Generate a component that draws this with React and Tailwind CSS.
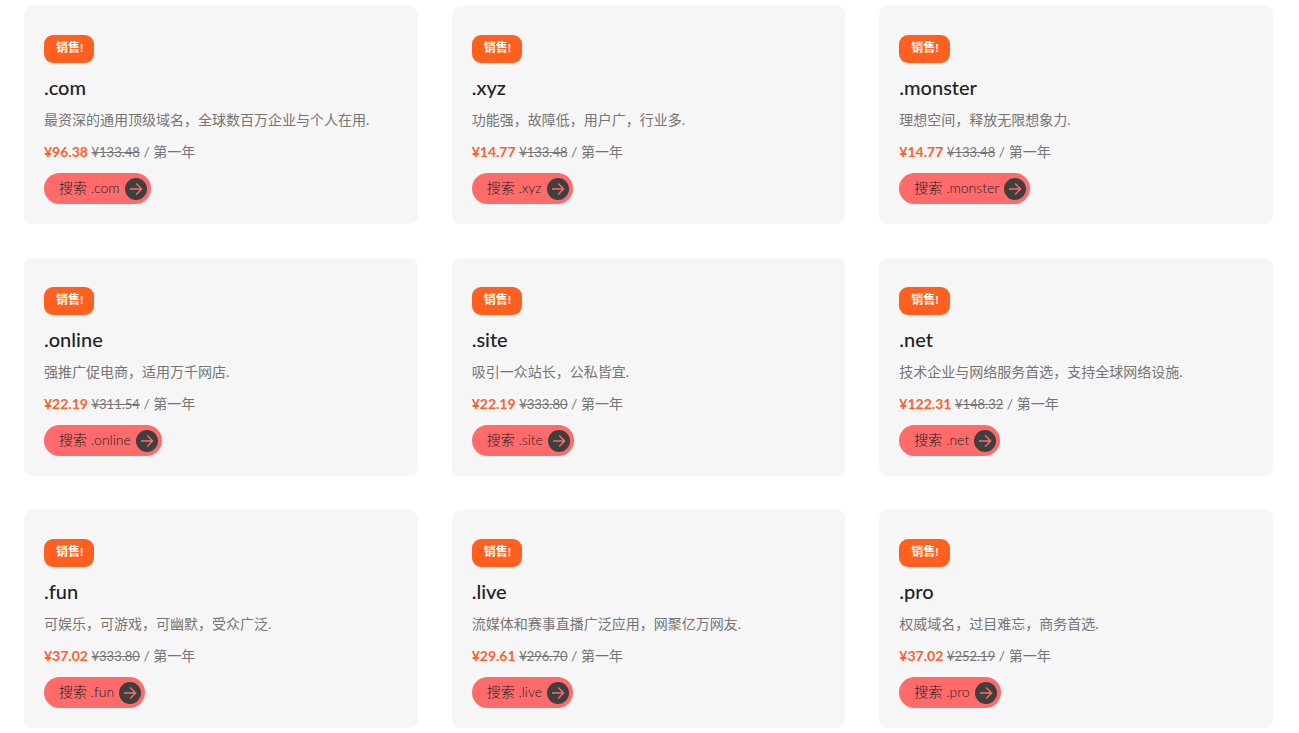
const domains = [
  {name: ".com", description: "最资深的通用顶级域名，全球数百万企业与个人在用.", price: "¥96.38", oldPrice: "¥133.48"},
  {name: ".xyz", description: "功能强，故障低，用户广，行业多.", price: "¥14.77", oldPrice: "¥133.48"},
  {name: ".monster", description: "理想空间，释放无限想象力.", price: "¥14.77", oldPrice: "¥133.48"},
  {name: ".online", description: "强推广促电商，适用万千网店.", price: "¥22.19", oldPrice: "¥311.54"},
  {name: ".site", description: "吸引一众站长，公私皆宜.", price: "¥22.19", oldPrice: "¥333.80"},
  {name: ".net", description: "技术企业与网络服务首选，支持全球网络设施.", price: "¥122.31", oldPrice: "¥148.32"},
  {name: ".fun", description: "可娱乐，可游戏，可幽默，受众广泛.", price: "¥37.02", oldPrice: "¥333.80"},
  {name: ".live", description: "流媒体和赛事直播广泛应用，网聚亿万网友.", price: "¥29.61", oldPrice: "¥296.70"},
  {name: ".pro", description: "权威域名，过目难忘，商务首选.", price: "¥37.02", oldPrice: "¥252.19"},
];

const ArrowIcon = () => (
  <svg viewBox="0 0 22 22" className="size-[22px] shrink-0" fill="none" aria-hidden="true">
    <circle cx="11" cy="11" r="11" fill="#3f3f3f"/>
    <path d="M5 11h11.5M11.2 5.6l5.4 5.4-5.4 5.4" stroke="#ff6b6b" strokeWidth="1.4"/>
  </svg>
);

const DomainCard = ({name, description, price, oldPrice}) => (
  <article className="flex flex-col items-start rounded-lg bg-[#f6f6f6] px-5 pt-[29px] pb-5">
    <span className="rounded-[9px] bg-[#ff5f1f] pr-[11px] pb-0.5 pl-3 text-xs leading-[26px] font-bold text-white">销售!</span>
    <h2 className="mt-2.5 text-xl leading-7 font-medium text-[#222]">{name}</h2>
    <p className="mt-[3px] leading-8">{description}</p>
    <p className="leading-8">
      <strong className="font-bold text-[#ff5f2b]">{price}</strong>{" "}
      <del className="text-[13px]">{oldPrice}</del> / 第一年
    </p>
    <a
      href={`#${name.slice(1)}`}
      className="mt-[5px] flex h-[31px] items-center gap-[5px] rounded-full bg-[#ff6b6b] pr-1 pl-[15px] leading-5 font-light whitespace-nowrap text-[#222]"
    >
      <span className="pb-0.5">搜索 {name}</span>
      <ArrowIcon/>
    </a>
  </article>
);

const App = () => (
  <main className="grid grid-cols-3 gap-[34px] bg-white pt-1.5 pr-[26px] pb-1.5 pl-6 font-['Lato','Noto_Sans_CJK_SC',sans-serif] text-sm font-normal text-[#757575]">
    {domains.map((domain) => (
      <DomainCard key={domain.name} {...domain}/>
    ))}
  </main>
);

export default App;
